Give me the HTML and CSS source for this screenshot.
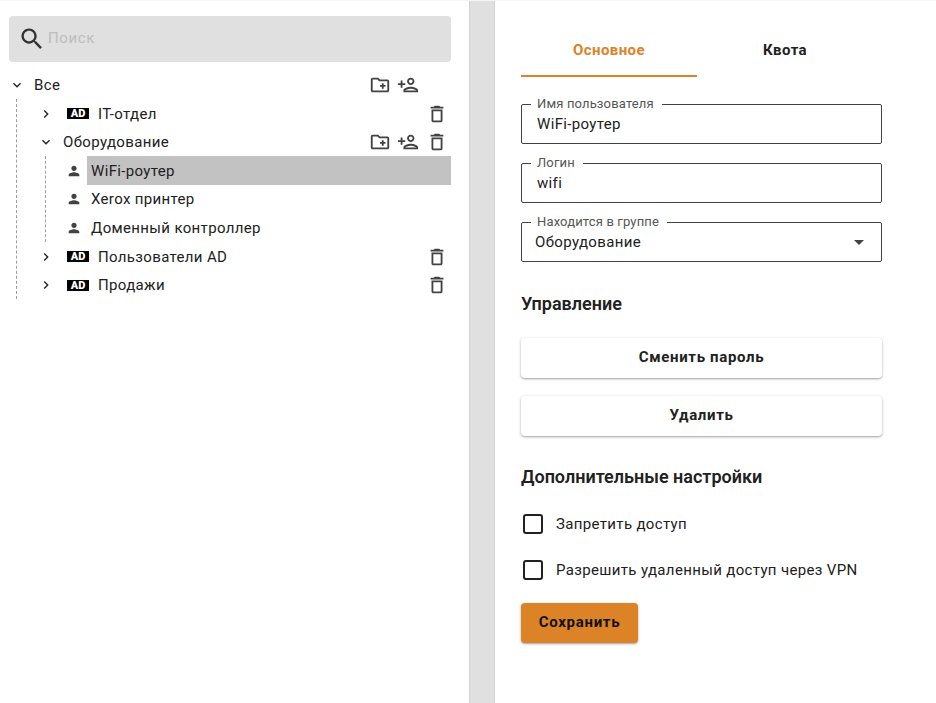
FILE: index.html
```html
<!DOCTYPE html>
<html lang="ru">
<head>
    <meta charset="UTF-8">
    <meta name="viewport" content="width=device-width, initial-scale=1.0">
    <title>Пользователи</title>
    <link rel="stylesheet" href="styles.css">
</head>
<body>
    <svg class="icon-defs" aria-hidden="true">
        <symbol id="i-search" viewBox="0 0 24 24"><path d="M15.5 14h-.79l-.28-.27C15.41 12.59 16 11.11 16 9.5 16 5.91 13.09 3 9.5 3S3 5.91 3 9.5 5.91 16 9.5 16c1.61 0 3.09-.59 4.23-1.57l.27.28v.79l5 4.99L20.49 19l-4.99-5zm-6 0C7.01 14 5 11.99 5 9.5S7.01 5 9.5 5 14 7.01 14 9.5 11.99 14 9.5 14z"/></symbol>
        <symbol id="i-folder" viewBox="0 0 24 24"><path d="M20 6h-8l-2-2H4c-1.11 0-1.99.89-1.99 2L2 18c0 1.11.89 2 2 2h16c1.11 0 2-.89 2-2V8c0-1.11-.89-2-2-2zm0 12H4V6h5.17l2 2H20v10zm-8-4h2v2h2v-2h2v-2h-2v-2h-2v2h-2z"/></symbol>
        <symbol id="i-add-user" viewBox="0 0 24 24"><path d="M15 12c2.21 0 4-1.79 4-4s-1.79-4-4-4-4 1.79-4 4 1.79 4 4 4zm0-6c1.1 0 2 .9 2 2s-.9 2-2 2-2-.9-2-2 .9-2 2-2zm0 8c-2.67 0-8 1.34-8 4v2h16v-2c0-2.66-5.33-4-8-4zm-6 4c.22-.72 3.31-2 6-2 2.7 0 5.8 1.29 6 2H9zm-3-3v-3h3v-2H6V7H4v3H1v2h3v3h2z"/></symbol>
        <symbol id="i-trash" viewBox="0 0 24 24"><path d="M6 19c0 1.1.9 2 2 2h8c1.1 0 2-.9 2-2V7H6v12zM8 9h8v10H8V9zm7.5-5l-1-1h-5l-1 1H5v2h14V4h-3.5z"/></symbol>
        <symbol id="i-person" viewBox="0 0 24 24"><path d="M12 12c2.21 0 4-1.79 4-4s-1.79-4-4-4-4 1.79-4 4 1.79 4 4 4zm0 2c-2.67 0-8 1.34-8 4v2h16v-2c0-2.66-5.33-4-8-4z"/></symbol>
        <symbol id="i-down" viewBox="0 0 24 24"><path d="M16.59 8.59L12 13.17 7.41 8.59 6 10l6 6 6-6z"/></symbol>
        <symbol id="i-right" viewBox="0 0 24 24"><path d="M10 6L8.59 7.41 13.17 12l-4.58 4.59L10 18l6-6z"/></symbol>
    </svg>

    <div class="page">
        <!-- Дерево групп -->
        <aside class="left-pane">
            <div class="search">
                <svg class="icon search-icon"><use href="#i-search"/></svg>
                <input class="search-input" type="text" placeholder="Поиск">
            </div>

            <div class="tree">
                <div class="row">
                    <svg class="chevron"><use href="#i-down"/></svg>
                    <span class="row-text">Все</span>
                    <span class="actions">
                        <svg class="icon"><use href="#i-folder"/></svg>
                        <svg class="icon"><use href="#i-add-user"/></svg>
                        <span class="icon"></span>
                    </span>
                </div>

                <div class="branch">
                    <div class="row">
                        <svg class="chevron"><use href="#i-right"/></svg>
                        <span class="ad-badge">AD</span>
                        <span class="row-text">IT-отдел</span>
                        <span class="actions">
                            <svg class="icon"><use href="#i-trash"/></svg>
                        </span>
                    </div>

                    <div class="row">
                        <svg class="chevron"><use href="#i-down"/></svg>
                        <span class="row-text">Оборудование</span>
                        <span class="actions">
                            <svg class="icon"><use href="#i-folder"/></svg>
                            <svg class="icon"><use href="#i-add-user"/></svg>
                            <svg class="icon"><use href="#i-trash"/></svg>
                        </span>
                    </div>

                    <div class="branch branch-inner">
                        <div class="row">
                            <svg class="person"><use href="#i-person"/></svg>
                            <span class="leaf-text selected">WiFi-роутер</span>
                        </div>
                        <div class="row">
                            <svg class="person"><use href="#i-person"/></svg>
                            <span class="leaf-text">Xerox принтер</span>
                        </div>
                        <div class="row">
                            <svg class="person"><use href="#i-person"/></svg>
                            <span class="leaf-text">Доменный контроллер</span>
                        </div>
                    </div>

                    <div class="row">
                        <svg class="chevron"><use href="#i-right"/></svg>
                        <span class="ad-badge">AD</span>
                        <span class="row-text">Пользователи AD</span>
                        <span class="actions">
                            <svg class="icon"><use href="#i-trash"/></svg>
                        </span>
                    </div>

                    <div class="row">
                        <svg class="chevron"><use href="#i-right"/></svg>
                        <span class="ad-badge">AD</span>
                        <span class="row-text">Продажи</span>
                        <span class="actions">
                            <svg class="icon"><use href="#i-trash"/></svg>
                        </span>
                    </div>
                </div>
            </div>
        </aside>

        <div class="divider"></div>

        <!-- Карточка пользователя -->
        <main class="right-pane">
            <div class="tabs">
                <div class="tab tab-active">Основное</div>
                <div class="tab">Квота</div>
            </div>

            <div class="fields">
                <div class="field">
                    <label class="field-label" for="name">Имя пользователя</label>
                    <input class="field-input" id="name" type="text" value="WiFi-роутер">
                </div>
                <div class="field">
                    <label class="field-label" for="login">Логин</label>
                    <input class="field-input" id="login" type="text" value="wifi">
                </div>
                <div class="field">
                    <label class="field-label" for="group">Находится в группе</label>
                    <select class="field-select" id="group">
                        <option>Оборудование</option>
                    </select>
                    <span class="select-arrow"></span>
                </div>
            </div>

            <h3 class="section-title">Управление</h3>
            <button class="action-btn" type="button">Сменить пароль</button>
            <button class="action-btn" type="button">Удалить</button>

            <h3 class="section-title section-extra">Дополнительные настройки</h3>
            <label class="check">
                <input type="checkbox">
                <span>Запретить доступ</span>
            </label>
            <label class="check">
                <input type="checkbox">
                <span>Разрешить удаленный доступ через VPN</span>
            </label>

            <button class="save-btn" type="button">Сохранить</button>
        </main>
    </div>
</body>
</html>
```

FILE: styles.css
```css
/* Base */
html, body {
    height: 100%;
}

body {
    margin: 0;
    font-family: 'Roboto', sans-serif;
    font-size: 15px;
    letter-spacing: 0.35px;
    color: #212121;
    background-color: #fff;
    overflow: hidden;
}

.icon-defs {
    display: none;
}

.page {
    display: flex;
    height: 703px;
    border-top: 1px solid #f5f5f5;
    box-sizing: border-box;
}

/* Left pane */
.left-pane {
    width: 469px;
    box-sizing: border-box;
    padding: 15px 18px 0 9px;
}

.search {
    display: flex;
    align-items: center;
    height: 46px;
    padding-left: 9px;
    background-color: #e0e0e0;
    border-radius: 4px;
}

.search .search-icon {
    width: 28px;
    height: 28px;
    fill: #333;
}

.search-input {
    flex: 1;
    min-width: 0;
    margin-left: 2px;
    padding: 0 0 2px;
    border: none;
    outline: none;
    background: transparent;
    font-family: inherit;
    font-size: 15px;
    letter-spacing: 0.6px;
}

.search-input::placeholder {
    color: #bdbdbd;
    opacity: 1;
}

/* Tree */
.tree {
    margin-top: 8.65px;
}

.row {
    display: flex;
    align-items: center;
    height: 28.6px;
}

.chevron {
    width: 16px;
    height: 16px;
    flex: none;
    fill: #212121;
}

.row-text {
    margin-left: 9px;
}

.branch > .row > .chevron {
    margin-left: 1px;
}

.actions {
    display: flex;
    gap: 6px;
    margin-left: auto;
    margin-right: 3px;
}

.actions .icon:last-child {
    margin-left: 1px;
}

.icon {
    display: block;
    width: 22px;
    height: 22px;
    flex: none;
    fill: #424242;
}

.branch {
    margin-left: 7px;
    padding-left: 20px;
    border-left: 1px dashed #9e9e9e;
}

.branch-inner {
    margin-left: 8px;
    padding-left: 20px;
}

.person {
    width: 16px;
    height: 16px;
    flex: none;
    fill: #424242;
}

.leaf-text {
    flex: 1;
    display: flex;
    align-items: center;
    height: 100%;
    margin-left: 5px;
    padding-left: 4px;
}

.selected {
    background-color: #c2c2c2;
}

.ad-badge {
    width: 22px;
    height: 11px;
    margin-left: 13px;
    flex: none;
    background-color: #000;
    color: #fff;
    font-size: 11px;
    font-weight: 900;
    letter-spacing: 0;
    line-height: 11px;
    text-align: center;
}

/* Divider */
.divider {
    width: 26px;
    box-sizing: border-box;
    background-color: #e0e0e0;
    border-left: 1px solid #d2d2d2;
    border-right: 1px solid #d2d2d2;
}

/* Right pane */
.right-pane {
    width: 361px;
    margin-left: 26px;
}

.tabs {
    display: flex;
    width: 352px;
    margin-top: 23px;
}

.tab {
    flex: 1;
    height: 53px;
    line-height: 52px;
    box-sizing: border-box;
    text-align: center;
    font-size: 15px;
    font-weight: 700;
    letter-spacing: 0.4px;
}

.tab-active {
    color: #dc8227;
    border-bottom: 2px solid #dc8227;
}

/* Champs */
.fields {
    display: flex;
    flex-direction: column;
    gap: 19px;
    margin-top: 27px;
}

.field {
    position: relative;
    height: 40px;
    box-sizing: border-box;
    border: 1px solid #424242;
    border-radius: 2px;
}

.field-label {
    position: absolute;
    top: -8px;
    left: 9px;
    padding: 0 8px 0 6px;
    background-color: #fff;
    color: #555;
    font-size: 13px;
    letter-spacing: 0.15px;
    line-height: 14px;
}

.field-input,
.field-select {
    display: block;
    width: 100%;
    height: 100%;
    box-sizing: border-box;
    border: none;
    outline: none;
    background: transparent;
    font-family: inherit;
    font-size: 15px;
    letter-spacing: 0.35px;
    color: #212121;
}

.field-input {
    padding: 0 15px;
}

.field-select {
    padding: 0 13px;
    appearance: none;
}

.select-arrow {
    position: absolute;
    top: 17px;
    right: 17px;
    border-left: 5.5px solid transparent;
    border-right: 5.5px solid transparent;
    border-top: 5.5px solid #424242;
}

/* Sections */
.section-title {
    margin: 31px 0 0;
    font-size: 18px;
    font-weight: 600;
    letter-spacing: 0;
    line-height: 21px;
}

.action-btn {
    display: block;
    width: 100%;
    height: 40px;
    margin-top: 18px;
    padding: 0 0 2px;
    border: none;
    border-radius: 4px;
    background-color: #fff;
    box-shadow: 0 1px 3px rgba(0, 0, 0, 0.3), 0 1px 1px rgba(0, 0, 0, 0.1);
    font-family: inherit;
    font-size: 15px;
    font-weight: 700;
    letter-spacing: 0.65px;
    color: #212121;
}

.section-title + .action-btn {
    margin-top: 24px;
}

.section-extra {
    margin-top: 30px;
}

/* Cases a cocher */
.check {
    display: flex;
    align-items: center;
    gap: 13px;
    height: 22px;
    margin-top: 24px;
    margin-left: 2px;
}

.section-extra + .check {
    margin-top: 26px;
}

.check input {
    width: 20px;
    height: 20px;
    margin: 0;
    box-sizing: border-box;
    appearance: none;
    border: 2px solid #212121;
    border-radius: 3px;
    background-color: #fff;
}

.save-btn {
    display: block;
    width: 117px;
    height: 40px;
    margin-top: 22px;
    padding: 0 0 2px;
    border: none;
    border-radius: 4px;
    background-color: #dc8227;
    box-shadow: 0 1px 3px rgba(0, 0, 0, 0.3), 0 1px 1px rgba(0, 0, 0, 0.1);
    font-family: inherit;
    font-size: 15px;
    font-weight: 700;
    letter-spacing: 0.7px;
    color: #111;
}
```
